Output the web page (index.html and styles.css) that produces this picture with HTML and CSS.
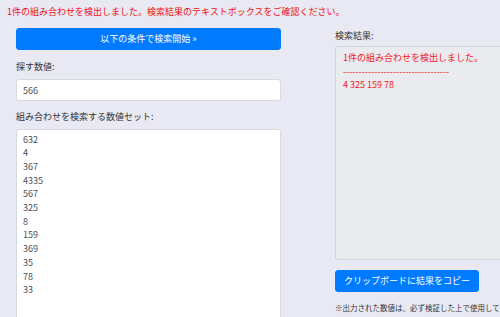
FILE: index.html
```html
<!DOCTYPE html>
<html lang="ja">
<head>
<meta charset="utf-8">
<title>組み合わせ検索</title>
<link rel="stylesheet" href="styles.css">
</head>
<body>
<p class="alert-msg">1件の組み合わせを検出しました。検索結果のテキストボックスをご確認ください。</p>
<div class="main">
  <div class="col-left">
    <button class="btn btn-search">以下の条件で検索開始 »</button>
    <div class="group">
      <label class="field-label">探す数値:</label>
      <input class="field" type="text" value="566">
    </div>
    <div class="group">
      <label class="field-label">組み合わせを検索する数値セット:</label>
      <textarea class="field area">632
4
367
4335
567
325
8
159
369
35
78
33</textarea>
    </div>
  </div>
  <div class="col-right">
    <label class="field-label">検索結果:</label>
    <div class="result-box">1件の組み合わせを検出しました。
----------------------------------
4 325 159 78</div>
    <button class="btn btn-copy">クリップボードに結果をコピー</button>
    <p class="note">※出力された数値は、必ず検証した上で使用してください。</p>
  </div>
</div>
</body>
</html>
```
FILE: styles.css
```css
html, body {
  margin: 0;
  padding: 0;
}
body {
  width: 500px;
  height: 317px;
  overflow: hidden;
  background: #e9e9f3;
  font-family: "Noto Sans CJK JP", "Noto Sans", sans-serif;
  font-size: 9px;
  line-height: 13.5px;
  color: #333;
}
.alert-msg {
  margin: 0;
  padding: 5px 0 0 7px;
  color: #f01010;
  white-space: nowrap;
}
.main {
  display: grid;
  grid-template-columns: 265px 270px;
  column-gap: 54px;
  padding: 9px 0 0 16px;
}
.col-left, .col-right {
  display: flex;
  flex-direction: column;
  align-items: stretch;
}
.btn {
  font-family: inherit;
  font-size: 9px;
  line-height: 13.5px;
  color: #fff;
  background: #007bff;
  border: 1px solid #007bff;
  border-radius: 3px;
  cursor: pointer;
}
.btn-search {
  height: 22px;
  padding: 0;
}
.group {
  display: flex;
  flex-direction: column;
  margin-top: 10px;
}
.group + .group {
  margin-top: 9px;
}
.field-label {
  margin-bottom: 6px;
  color: #333;
}
.group + .group .field-label {
  margin-bottom: 5px;
}
.field {
  font-family: inherit;
  font-size: 9px;
  line-height: 13.7px;
  color: #495057;
  background: #fff;
  border: 1px solid #d6d9de;
  border-radius: 3px;
  box-sizing: border-box;
  outline: none;
}
input.field {
  height: 22px;
  padding: 0 6px;
}
.area {
  height: 200px;
  padding: 3px 6px;
  resize: none;
  overflow: hidden;
}
.col-right .field-label {
  margin-top: 1px;
  margin-bottom: 4px;
}
.result-box {
  height: 214px;
  box-sizing: border-box;
  padding: 4px 7px;
  background: #e9ebef;
  border: 1px solid #ced4da;
  border-radius: 3px;
  color: #f02020;
  white-space: pre;
  overflow: hidden;
}
.btn-copy {
  align-self: flex-start;
  margin-top: 10px;
  height: 22px;
  padding: 0 8px;
}
.note {
  margin: 10px 0 0;
  font-size: 7.5px;
  line-height: 11px;
  color: #333;
  white-space: nowrap;
}
```
